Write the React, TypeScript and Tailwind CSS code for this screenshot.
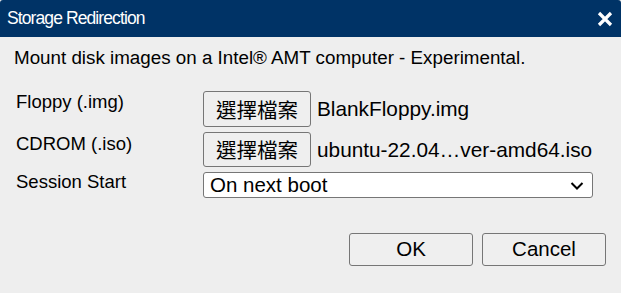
import React from "react";

const F = { fontFamily: '"Liberation Sans", Arial, sans-serif' };

function FileBtn() {
  return (
    <button
      className="h-full w-[108px] shrink-0 rounded-[3px] border border-[#767676] bg-[#efefef] text-[20.5px] leading-none text-black"
      style={{ fontFamily: '"Noto Sans CJK TC", "Noto Sans CJK SC", sans-serif' }}
    >
      選擇檔案
    </button>
  );
}

export default function App() {
  return (
    <div className="h-[293px] w-[621px] overflow-hidden bg-[#eeeeee] text-black" style={F}>
      <div className="flex h-[37px] items-center justify-between rounded-t-[3px] bg-[#003366] pl-[7px] pr-[7px]">
        <span className="text-[17.5px] tracking-[-0.9px] text-white">Storage Redirection</span>
        <svg width="16" height="16" viewBox="0 0 16 16" className="mr-[1px]">
          <path d="M2 2 L14 14 M14 2 L2 14" stroke="white" strokeWidth="3.2" strokeLinecap="butt" />
        </svg>
      </div>
      <div className="pl-[14px] pt-[10px] text-[18.8px] leading-[22px]">
        Mount disk images on a Intel® AMT computer - Experimental.
      </div>
      <div className="mt-[22px] grid grid-cols-[189px_1fr] grid-rows-[36px_35px_26px] gap-y-[5px] pl-[14px] pr-[28px] text-[18.5px]">
        <div className="pl-[2px] leading-[22px]">Floppy (.img)</div>
        <div className="flex items-center gap-[6px]">
          <FileBtn />
          <span className="text-[20.8px]">BlankFloppy.img</span>
        </div>
        <div className="pl-[2px] pt-[1px] leading-[22px]">CDROM (.iso)</div>
        <div className="flex items-center gap-[6px]">
          <FileBtn />
          <span className="text-[20.8px]">ubuntu-22.04…ver-amd64.iso</span>
        </div>
        <div className="pl-[2px] leading-[20px]">Session Start</div>
        <div className="relative flex items-center rounded-[3px] border border-[#767676] bg-white pl-[6px] text-[20.5px]">
          On next boot
          <svg width="14" height="10" viewBox="0 0 14 10" className="absolute right-[8px] top-[8px]">
            <path d="M1.5 2 L7 7.5 L12.5 2" fill="none" stroke="black" strokeWidth="2" />
          </svg>
        </div>
      </div>
      <div className="mt-[35px] flex justify-end gap-[9px] pr-[15px]">
        <button className="h-[33px] w-[124px] rounded-[3px] border border-[#767676] bg-[#efefef] text-[20.5px]">OK</button>
        <button className="h-[33px] w-[124px] rounded-[3px] border border-[#767676] bg-[#efefef] text-[20.5px]">Cancel</button>
      </div>
    </div>
  );
}
